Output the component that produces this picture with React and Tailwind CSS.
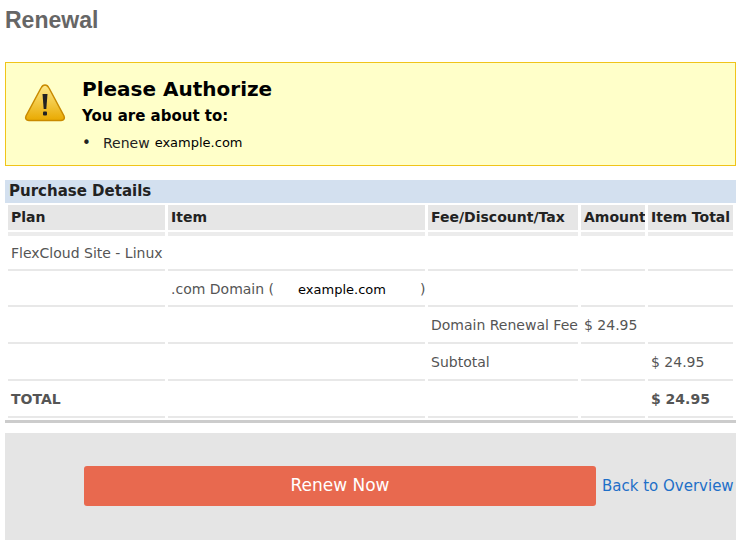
import React from "react";

const V = { fontFamily: '"DejaVu Sans", Verdana, sans-serif' };

const Warn = () => (
  <svg width="46" height="46" viewBox="0 0 46 46">
    <defs>
      <linearGradient id="g" x1="0" y1="0" x2="0" y2="1">
        <stop offset="0" stopColor="#fde98a" />
        <stop offset="1" stopColor="#e9a900" />
      </linearGradient>
    </defs>
    <path d="M23 4 Q25.5 4 27 7 L42 35 Q43.5 39 39 39.5 L7 39.5 Q2.5 39 4 35 L19 7 Q20.5 4 23 4Z" fill="url(#g)" stroke="#c98a00" strokeWidth="1.5" />
    <path d="M20.5 13 L25.5 13 L24.3 28 L21.7 28Z" fill="#222" />
    <rect x="21" y="30.5" width="4" height="4" rx="1" fill="#222" />
  </svg>
);

const cell = "px-[3px] text-[14px] text-[#555] border-b-2 border-[#e8e8e8] align-middle whitespace-nowrap";
const th = "bg-[#e6e6e6] px-[3px] whitespace-nowrap overflow-hidden";

export default function App() {
  return (
    <div className="w-[744px] h-[558px] bg-white px-[5px] pt-[5px]" style={V}>
      <h1 className="text-[23px] font-bold text-[#666] leading-[30px]" style={{ fontFamily: '"Liberation Sans", Arial, sans-serif' }}>Renewal</h1>
      <div className="mt-[27px] w-[731px] h-[104px] bg-[#ffffc9] border border-[#f0c419] flex">
        <div className="w-[76px] pl-[16px] pt-[18px]"><Warn /></div>
        <div className="pt-[13px]">
          <div className="text-[20px] font-bold text-black leading-[26px]">Please Authorize</div>
          <div className="text-[15px] font-bold text-black leading-[20px] mt-[4px]">You are about to:</div>
          <div className="flex items-center text-[14px] text-[#222] mt-[7px] leading-[20px]">
            <span className="w-[21px] text-[15px]">•</span>
            <span>Renew</span>
            <span className="ml-[5px] text-[13px] text-black">example.com</span>
          </div>
        </div>
      </div>
      <div className="mt-[14px] w-[731px] bg-[#d3e0ef] h-[23px] px-[4px] text-[15px] font-bold text-[#222] leading-[23px]">Purchase Details</div>
      <table className="table-fixed w-[731px] border-separate border-spacing-x-[3px] border-spacing-y-[2px]">
        <colgroup>
          <col className="w-[157px]" /><col className="w-[257px]" /><col className="w-[150px]" /><col className="w-[64px]" /><col />
        </colgroup>
        <thead>
          <tr className="h-[25px] text-[14px] font-bold text-[#222] text-left">
            <th className={th}>Plan</th>
            <th className={th}>Item</th>
            <th className={th}>Fee/Discount/Tax</th>
            <th className={th}>Amount</th>
            <th className={th + " px-[1px]"}>Item Total</th>
          </tr>
        </thead>
        <tbody>
          <tr className="h-[4px]">{[0,1,2,3,4].map(i => <td key={i} className="bg-[#ececec] p-0" />)}</tr>
          <tr className="h-[33px]">
            <td className={cell}>FlexCloud Site - Linux</td><td className={cell} /><td className={cell} /><td className={cell} /><td className={cell} />
          </tr>
          <tr className="h-[34px]">
            <td className={cell} />
            <td className={cell}>.com Domain (<span className="ml-[24px] mr-[34px] text-[13px] text-black">example.com</span>)</td>
            <td className={cell} /><td className={cell} /><td className={cell} />
          </tr>
          <tr className="h-[35px]">
            <td className={cell} /><td className={cell} /><td className={cell}>Domain Renewal Fee</td><td className={cell}>$ 24.95</td><td className={cell} />
          </tr>
          <tr className="h-[35px]">
            <td className={cell} /><td className={cell} /><td className={cell}>Subtotal</td><td className={cell} /><td className={cell}>$ 24.95</td>
          </tr>
          <tr className="h-[35px] font-bold">
            <td className={cell}>TOTAL</td><td className={cell} /><td className={cell} /><td className={cell} /><td className={cell}>$ 24.95</td>
          </tr>
        </tbody>
      </table>
      <div className="w-[731px] h-[3px] bg-[#cccccc]" />
      <div className="mt-[10px] w-[731px] h-[107px] bg-[#e5e5e5] flex items-center pl-[79px] pb-[1px]">
        <button className="w-[512px] h-[40px] bg-[#e8694f] rounded-[3px] text-white text-[17px]">Renew Now</button>
        <a className="ml-[6px] text-[15px] text-[#1e6fc8]">Back to Overview</a>
      </div>
    </div>
  );
}
